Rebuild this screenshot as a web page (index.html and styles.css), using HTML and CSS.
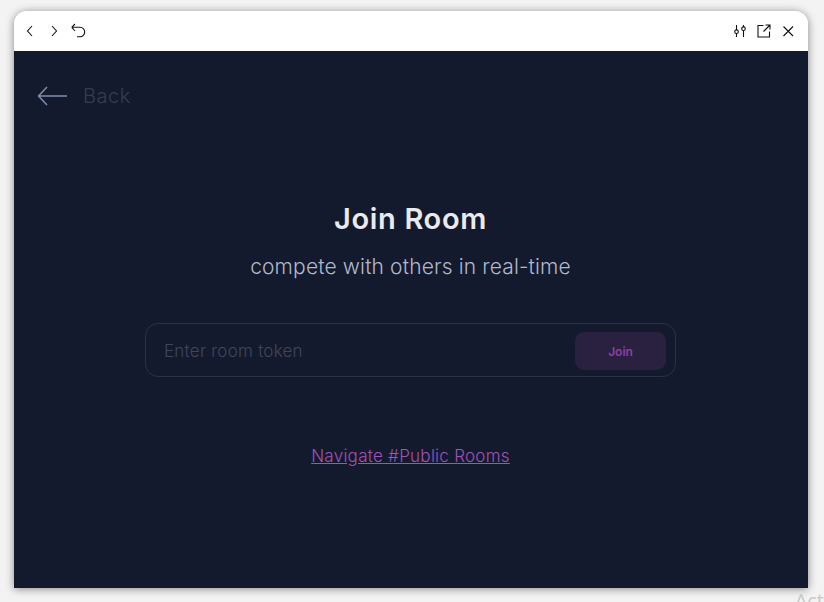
FILE: index.html
```html
<!DOCTYPE html>
<html lang="en">
<head>
    <meta charset="UTF-8">
    <title>Join Room</title>
    <link rel="stylesheet" href="styles.css">
</head>
<body>

<div class="window">
    <div class="titlebar">
        <div class="tools">
            <svg class="icon" viewBox="0 0 16 16"><path d="M10 3 5.500 8l4.500 5"/></svg>
            <svg class="icon" viewBox="0 0 16 16"><path d="M6 3l4.500 5L6 13"/></svg>
            <svg class="icon" viewBox="0 0 16 16"><path d="M1.700 4.300h8.300a4.700 4.700 0 0 1 0 9.400H7M1.700 4.300 5 1M1.700 4.300 5 8"/></svg>
        </div>
        <div class="tools">
            <svg class="icon" viewBox="0 0 16 16"><path d="M4.500 2v5M4.500 10.500V14M11.500 2v2M11.500 7.500V14"/><circle cx="4.500" cy="8.700" r="1.800"/><circle cx="11.500" cy="5.700" r="1.800"/></svg>
            <svg class="icon" viewBox="0 0 16 16"><path d="M7.500 2.500H2v11.500h11.500V8.500M7.500 8.500l6-6M9.500 2H14v4.500"/></svg>
            <svg class="icon" viewBox="0 0 16 16"><path d="M3.500 3.500l9.500 9.500M13 3.500l-9.500 9.500"/></svg>
        </div>
    </div>

    <div class="content">
        <a class="back" href="#">
            <svg class="back-arrow" viewBox="0 0 30 20"><path d="M30 10H1.500M10 1 1.500 10l8.500 9"/></svg>
            <span>Back</span>
        </a>

        <div class="join">
            <h1>Join Room</h1>
            <p class="subtitle">compete with others in real-time</p>
            <div class="token-box">
                <input class="token-input" type="text" placeholder="Enter room token">
                <button class="join-btn">Join</button>
            </div>
            <a class="public-link" href="#">Navigate #Public Rooms</a>
        </div>
    </div>
</div>

<div class="activate">Act</div>

</body>
</html>
```

FILE: styles.css
```css
html, body {
    height: 100%;
    overflow: hidden;
}
body {
    margin: 0;
    padding: 11px 16px 14px 14px;
    box-sizing: border-box;
    background: #f3f3f3;
    font-family: Inter, "Open Sans", sans-serif;
}
.window {
    height: 577px;
    display: flex;
    flex-direction: column;
    border-radius: 13px 13px 0 0;
    overflow: hidden;
    box-shadow: 0 1px 8px rgba(0, 0, 0, 0.45);
}
.titlebar {
    height: 40px;
    flex-shrink: 0;
    box-sizing: border-box;
    display: flex;
    justify-content: space-between;
    align-items: center;
    padding: 0 12px 0 8px;
    background: #fff;
}
.tools {
    display: flex;
    gap: 8px;
}
.icon {
    width: 16px;
    height: 16px;
    fill: none;
    stroke: #111;
    stroke-width: 1.1;
}
.content {
    flex: 1;
    padding: 30px 0 0 23px;
    background: #141a2d;
}
.back {
    display: flex;
    align-items: center;
    gap: 16px;
    height: 30px;
    color: #363c52;
    font-size: 20px;
    letter-spacing: 0.5px;
    font-weight: 300;
    text-decoration: none;
}
.back-arrow {
    width: 30px;
    height: 20px;
    fill: none;
    stroke: #7f8cab;
    stroke-width: 1.5;
}
.join {
    width: 531px;
    margin: 0 auto;
    padding: 87px 0 0;
    position: relative;
    left: -12px;
    display: flex;
    flex-direction: column;
    align-items: center;
}
h1 {
    margin: 0;
    color: #e8eaee;
    font-size: 29px;
    line-height: 42px;
    letter-spacing: 0.65px;
    font-weight: 600;
}
.subtitle {
    margin: 12px 0 0;
    color: #b0b9cc;
    font-size: 21px;
    line-height: 30px;
    letter-spacing: 0.15px;
    font-weight: 300;
}
.token-box {
    width: 100%;
    height: 54px;
    box-sizing: border-box;
    margin-top: 41px;
    padding: 2px 9px 0 18px;
    display: flex;
    align-items: center;
    border: 1px solid #2b3145;
    border-radius: 13px;
}
.token-input {
    flex: 1;
    min-width: 0;
    padding: 0;
    border: none;
    outline: none;
    background: transparent;
    color: #e8eaee;
    font-family: inherit;
    font-size: 17px;
    letter-spacing: 0.25px;
    font-weight: 300;
}
.token-input::placeholder {
    color: #3f465b;
    opacity: 1;
}
.join-btn {
    width: 91px;
    height: 38px;
    border: none;
    border-radius: 9px;
    background: #2a2140;
    color: #8a3fa8;
    font-family: inherit;
    font-size: 12px;
    font-weight: 600;
}
.public-link {
    margin-top: 66px;
    color: #a052b8;
    font-size: 17px;
    line-height: 26px;
    letter-spacing: 0.27px;
    font-weight: 300;
}
/* watermark cut off by the bottom edge */
.activate {
    position: absolute;
    right: 0;
    top: 587px;
    color: #c8c8c8;
    font-family: "Open Sans", sans-serif;
    font-size: 20px;
    white-space: nowrap;
}
```
